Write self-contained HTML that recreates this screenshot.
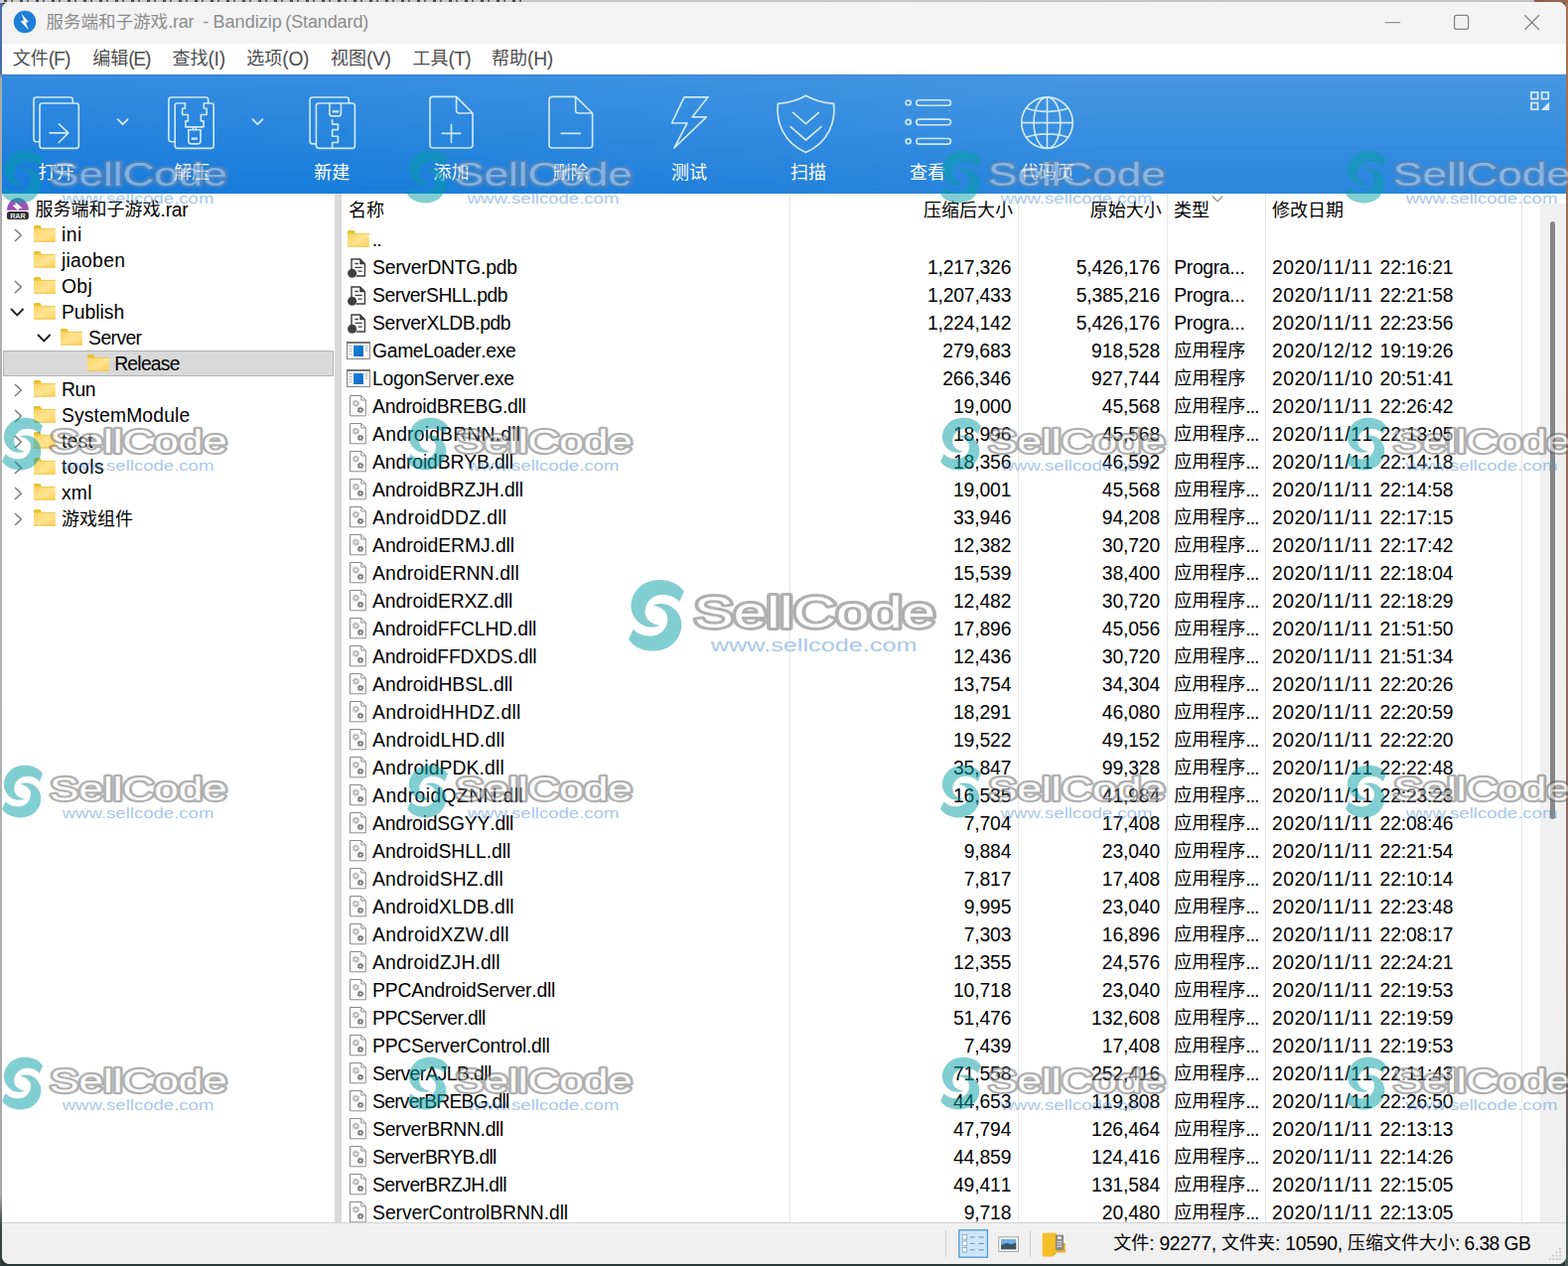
<!DOCTYPE html>
<html><head><meta charset="utf-8"><title>Bandizip</title>
<style>
html,body{margin:0;padding:0}
body{width:1579px;height:1275px;overflow:hidden;position:relative;background:#2b3a39;font-family:"Liberation Sans",sans-serif}
.t{position:absolute;white-space:pre;font-kerning:none;font-variant-ligatures:none;font-family:"Liberation Sans",sans-serif}
.z{font-family:"Liberation Sans","Noto Sans CJK SC",sans-serif;font-size:18px;line-height:18px}
.cj{position:absolute;overflow:visible}
#desk{position:absolute;left:0;top:0;width:1579px;height:1275px;background:#2b3a39}
#win{position:absolute;left:2px;top:2px;width:1575px;height:1270.6px;border-radius:8px;overflow:hidden;background:#fff}
#in{position:absolute;left:-2px;top:-2px;width:1579px;height:1275px}
#wmk{position:absolute;left:0;top:0;width:1579px;height:1275px;overflow:hidden}
</style></head><body>
<div id="desk">
<div style="position:absolute;left:0;top:0;width:1579px;height:3px;background:linear-gradient(to right,#c9c9c9 0,#c2c2c2 1544px,#8a5a48 1546px,#9a6a50 1579px)"></div>
<div style="position:absolute;left:4px;top:0;width:524px;height:2px;background:repeating-linear-gradient(to right,rgba(30,30,30,.75) 0 3px,rgba(0,0,0,0) 3px 7px,rgba(30,30,30,.6) 7px 9px,rgba(0,0,0,0) 9px 16px)"></div>
<div style="position:absolute;left:0;top:3px;width:3px;height:1272px;background:linear-gradient(to bottom,#4a6cab 0,#4a6cab 70px,#ababab 76px,#b2b2b2 700px,#a8a8a8 1200px,#3a4644 1232px,#2f3c3a 1272px)"></div>
<div style="position:absolute;left:1576px;top:3px;width:3px;height:1272px;background:linear-gradient(to bottom,#a8734f 0,#9a6858 400px,#8a6a64 900px,#4d5a58 1272px)"></div>
</div>
<div id="win"><div id="in">
<div style="position:absolute;left:0;top:2.0px;width:1579px;height:42.3px;background:#f3f3f3"></div><svg style="position:absolute;left:13px;top:10px" width="24" height="24" viewBox="0 0 24 24">
<circle cx="12" cy="12" r="11.2" fill="#1d7fd8"/>
<path d="M8.4 3.6 L15.8 12 L12.9 12.7 L16 20.2 L7.6 11.4 L11 10.5 Z" fill="#fff"/></svg><span class="t z" style="left:46.40px;top:13.52px;font-size:17.55px;line-height:17.55px;color:#8c8c8c;">服务端和子游戏</span><span class="t" style="left:169.25px;top:13.00px;font-size:18.00px;line-height:18.00px;letter-spacing:-0.255px;color:#8c8c8c;">.rar</span><span class="t" style="left:204.30px;top:13.00px;font-size:18.00px;line-height:18.00px;letter-spacing:1.356px;color:#8c8c8c;">-</span><span class="t" style="left:214.60px;top:13.00px;font-size:18.00px;line-height:18.00px;letter-spacing:0.007px;color:#8c8c8c;">Bandizip</span><span class="t" style="left:287.30px;top:13.00px;font-size:18.00px;line-height:18.00px;letter-spacing:-0.120px;color:#8c8c8c;">(Standard)</span><svg style="position:absolute;left:1380px;top:2px" width="197" height="42" viewBox="1380 2 197 42" fill="none" stroke="#868686" stroke-width="1.3">
<path d="M1394.8 22.6H1410.2" stroke="#969696"/>
<rect x="1464.6" y="15.4" width="14" height="14" rx="2.2"/>
<path d="M1535.3 15.2L1550 30M1550 15.2L1535.3 30"/></svg><div style="position:absolute;left:0;top:44.3px;width:1579px;height:30.4px;background:#fff"></div><span class="t z" style="left:12.70px;top:50.00px;color:#4d4d4d;">文件</span><span class="t" style="left:48.70px;top:50.00px;font-size:19.30px;line-height:19.30px;letter-spacing:-0.994px;color:#4d4d4d;">(F)</span><span class="t z" style="left:93.20px;top:50.00px;color:#4d4d4d;">编辑</span><span class="t" style="left:129.20px;top:50.00px;font-size:19.30px;line-height:19.30px;letter-spacing:-1.235px;color:#4d4d4d;">(E)</span><span class="t z" style="left:173.50px;top:50.00px;color:#4d4d4d;">查找</span><span class="t" style="left:209.50px;top:50.00px;font-size:19.30px;line-height:19.30px;letter-spacing:-0.318px;color:#4d4d4d;">(I)</span><span class="t z" style="left:248.30px;top:50.00px;color:#4d4d4d;">选项</span><span class="t" style="left:284.30px;top:50.00px;font-size:19.30px;line-height:19.30px;letter-spacing:-0.307px;color:#4d4d4d;">(O)</span><span class="t z" style="left:333.10px;top:50.00px;color:#4d4d4d;">视图</span><span class="t" style="left:369.10px;top:50.00px;font-size:19.30px;line-height:19.30px;letter-spacing:-0.473px;color:#4d4d4d;">(V)</span><span class="t z" style="left:415.50px;top:50.00px;color:#4d4d4d;">工具</span><span class="t" style="left:451.50px;top:50.00px;font-size:19.30px;line-height:19.30px;letter-spacing:-0.755px;color:#4d4d4d;">(T)</span><span class="t z" style="left:495.00px;top:50.00px;color:#4d4d4d;">帮助</span><span class="t" style="left:531.00px;top:50.00px;font-size:19.30px;line-height:19.30px;letter-spacing:-0.240px;color:#4d4d4d;">(H)</span><div style="position:absolute;left:0;top:74.7px;width:1579px;height:120.3px;
background:linear-gradient(to bottom, rgba(255,255,255,.135) 0%, rgba(255,255,255,.10) 25%, rgba(255,255,255,.04) 70%, rgba(255,255,255,0) 100%),
linear-gradient(to right,#167adb 0%,#187cdb 22%,#2181dc 45%,#2a86dd 70%,#2a86dd 100%)"></div><div style="position:absolute;left:0;top:74.7px;width:1579px;height:1px;background:rgba(20,60,120,.18)"></div><svg style="position:absolute;left:0;top:75px" width="1579" height="120" viewBox="0 75 1579 120" fill="none" stroke="#cfe9fd" stroke-width="1.65" stroke-linejoin="round" stroke-linecap="round"><path d="M40 142.7H36.6Q34 142.7 34 140.1V100.6Q34 98 36.6 98H70.7Q73.3 98 73.3 100.6V103.6"/><rect x="40" y="104" width="39.3" height="45.3" rx="2.6"/><path d="M50 133.9H68.6M59.3 124.9L68.9 133.9L59.3 143.5"/><path d="M118.8 120.3L123.6 125.2L128.4 120.3M254.6 120.3L259.4 125.2L264.2 120.3" stroke-width="1.9"/><path d="M176.2 142.7H172.5Q169.9 142.7 169.9 140.1V100.6Q169.9 98 172.5 98H207.1Q209.7 98 209.7 100.6V103.6"/><path d="M186.4 104H178.4Q176.2 104 176.2 106.2V147.1Q176.2 149.3 178.4 149.3H213Q215.2 149.3 215.2 147.1V106.2Q215.2 104 213 104H205.3V109.2H208.1V115.5H202.3V121.9H205V127.9H186.9V121.9H189.4V115.5H183.6V109.2H186.4Z"/><path d="M194.3 128V130.6M197.3 128V130.6"/><path d="M189.8 130.7H202V141.4Q202 144.9 198.5 144.9H193.3Q189.8 144.9 189.8 141.4Z"/><path d="M193.6 139.7H198" stroke-width="2.2"/><path d="M318.4 144.9H314.7Q312.1 144.9 312.1 142.3V100.6Q312.1 98 314.7 98H348.7Q351.3 98 351.3 100.6V103.6"/><rect x="318.4" y="104" width="39" height="45.3" rx="2.6"/><path d="M331.9 104V114.2Q331.9 116.9 334.6 116.9H340.7Q343.4 116.9 343.4 114.2V104"/><path d="M335.6 112.4H340.2" stroke-width="2.2"/><path d="M334.6 120.8V125.1H340.4V130.6H334.6V137.2H340.4V143.5H334.6V149.3"/><path d="M459.6 97.4H436Q433 97.4 433 100.4V146Q433 149 436 149H473Q476 149 476 146V114Z M459.6 97.4V111Q459.6 114 462.6 114H476"/><path d="M445.4 134.4H463.6M454.5 125.4V143.4"/><path d="M579.6 97.4H556Q553 97.4 553 100.4V146Q553 149 556 149H593.6Q596.6 149 596.6 146V114Z M579.6 97.4V111Q579.6 114 582.6 114H596.6"/><path d="M565.2 134.4H584.4"/><path d="M689 97.8H713L697.2 117.8H711.4L678.8 149.2L692 124H676.5Z"/><path d="M811.5 96.2C803 101.6 792.5 103.6 783.4 104.4C781.4 122 788 143 811.5 153.6C835 143 841.6 122 839.6 104.4C830.5 103.6 820 101.6 811.5 96.2Z" stroke-width="1.7"/><path d="M798.6 113.4L811.5 124.6L824.4 113.4M796 127.6L811.5 141L827 127.6" stroke-width="1.7"/><circle cx="914.7" cy="103.5" r="2.5"/><rect x="922.8" y="100.7" width="34.6" height="5.6" rx="2.8"/><circle cx="914.7" cy="122.9" r="2.5"/><rect x="922.8" y="120.10000000000001" width="34.6" height="5.6" rx="2.8"/><circle cx="914.7" cy="142.3" r="2.5"/><rect x="922.8" y="139.5" width="34.6" height="5.6" rx="2.8"/><circle cx="1054.5" cy="123.6" r="25.8"/><ellipse cx="1054.5" cy="123.6" rx="13.4" ry="25.8"/><path d="M1054.5 97.8V149.4M1028.7 123.6H1080.3M1033.4 109C1046 113.4 1063 113.4 1075.6 109M1033.4 138.2C1046 133.8 1063 133.8 1075.6 138.2"/></svg><svg style="position:absolute;left:1538px;top:90px" width="26" height="24" viewBox="1538 90 26 24" fill="none" stroke="#d9edfc" stroke-width="1.7">
<rect x="1542" y="93" width="6.6" height="6.6"/><rect x="1552.6" y="93" width="6.6" height="6.6"/><rect x="1542" y="103.6" width="6.6" height="6.6"/>
<path d="M1560.1 102.8V111H1551.8Z" fill="#d9edfc" stroke="none"/></svg><span class="t z" style="left:38.50px;top:164.80px;color:#ffffff;">打开</span><span class="t z" style="left:175.00px;top:164.80px;color:#ffffff;">解压</span><span class="t z" style="left:316.20px;top:164.80px;color:#ffffff;">新建</span><span class="t z" style="left:436.40px;top:164.80px;color:#ffffff;">添加</span><span class="t z" style="left:556.40px;top:164.80px;color:#ffffff;">删除</span><span class="t z" style="left:676.00px;top:164.80px;color:#ffffff;">测试</span><span class="t z" style="left:796.00px;top:164.80px;color:#ffffff;">扫描</span><span class="t z" style="left:916.00px;top:164.80px;color:#ffffff;">查看</span><span class="t z" style="left:1027.40px;top:164.80px;color:#ffffff;">代码页</span><div style="position:absolute;left:0;top:195px;width:1579px;height:1036px;background:#fff"></div><div style="position:absolute;left:337.2px;top:195px;width:6.8px;height:1036px;background:#dadada"></div><div style="position:absolute;left:795.0px;top:195px;width:1px;height:1036px;background:#e6e6e6"></div><div style="position:absolute;left:1025.0px;top:195px;width:1px;height:1036px;background:#e6e6e6"></div><div style="position:absolute;left:1175.0px;top:195px;width:1px;height:1036px;background:#e6e6e6"></div><div style="position:absolute;left:1274.2px;top:195px;width:1px;height:1036px;background:#e6e6e6"></div><div style="position:absolute;left:1532.3px;top:195px;width:1px;height:1036px;background:#e6e6e6"></div><div style="position:absolute;left:1551px;top:205px;width:26px;height:1026px;background:#f0f0f0"></div><div style="position:absolute;left:1561px;top:222.6px;width:5px;height:602px;background:#878787;border-radius:2.5px"></div><svg width="0" height="0" style="position:absolute"><defs>
<linearGradient id="fg" x1="0" y1="0" x2="1" y2="1"><stop offset="0" stop-color="#fbd45f"/><stop offset="0.55" stop-color="#ffe491"/><stop offset="1" stop-color="#fbd055"/></linearGradient>
<linearGradient id="bg" x1="0" y1="0" x2="1" y2="1"><stop offset="0" stop-color="#1b86e6"/><stop offset="1" stop-color="#0f68bd"/></linearGradient>
<g id="folder"><path d="M0 1.4Q0 0 1.4 0H5.6Q6.6 0 7 0.9L8 3.4H0Z" fill="#e4c32a"/><rect x="0" y="2.9" width="21.8" height="13.7" fill="url(#fg)"/><rect x="0" y="15.6" width="21.8" height="1" fill="#eec244"/><rect x="0" y="2.9" width="21.8" height="0.8" fill="#e9c84e"/></g>
<g id="pdb"><path d="M4 11.5V0.9H12.6L17.4 5.7V17.9H8.6" fill="#fff" stroke="#3d3d3d" stroke-width="1.45"/><path d="M12.2 0.6L17.8 6.2H12.2Z" fill="#3d3d3d"/><path d="M7.4 5.5H10.9M7.4 9.4H14.8M10.4 13.2H14.8" stroke="#3d3d3d" stroke-width="1.3"/><circle cx="4.6" cy="15.3" r="4.5" fill="#3f3f3f"/></g>
<g id="exe"><rect x="0.5" y="0.8" width="22.8" height="16.6" fill="#fff" stroke="#7b7b7b" stroke-width="1"/><rect x="0" y="0" width="23.8" height="1.9" fill="#6e6e6e"/><rect x="7" y="3.8" width="9.9" height="11.2" fill="url(#bg)"/><path d="M2.6 4.4H5.6M2.6 7.2H5.6M2.6 10H5.6M2.6 12.8H5.6M18.6 4.4H21.4M18.6 6.8H21.4M18.6 9.2H21.4" stroke="#9a9a9a" stroke-width="0.9"/></g>
<g id="dll"><path d="M0.5 0.5H11.8L16.3 5V20.8H0.5Z" fill="#fff" stroke="#8a8a8a" stroke-width="1"/><path d="M11.8 0.5V5H16.3" fill="none" stroke="#8a8a8a" stroke-width="1"/>
<circle cx="6.4" cy="8.2" r="2" fill="none" stroke="#b8b8b8" stroke-width="1.7"/><circle cx="6.4" cy="8.2" r="3.2" fill="none" stroke="#b8b8b8" stroke-width="1.1" stroke-dasharray="1.25 1.25"/>
<circle cx="11" cy="14.9" r="1.7" fill="none" stroke="#747474" stroke-width="1.5"/><circle cx="11" cy="14.9" r="2.8" fill="none" stroke="#747474" stroke-width="1.1" stroke-dasharray="1.1 1.1"/></g>
<g id="chr"><path d="M0 0L6.3 6L0 12" fill="none" stroke="#757575" stroke-width="1.4"/></g>
<g id="chd"><path d="M0 0L6.3 6.4L12.6 0" fill="none" stroke="#222" stroke-width="1.9"/></g>
<linearGradient id="swg" gradientUnits="userSpaceOnUse" x1="-400" y1="-500" x2="400" y2="500"><stop offset="0" stop-color="#00a3a8"/><stop offset="1" stop-color="#14939f"/></linearGradient>
<g id="swirl"><path id="sw1" d="M395,-342 C310,-462 180,-507 50,-507 C-80,-507 -190,-462 -260,-382 C-330,-312 -360,-222 -360,-132 C-360,-22 -300,68 -210,128 C-120,183 -20,173 50,143 C-60,128 -150,68 -160,-32 C-170,-162 -80,-282 50,-292 C170,-302 270,-262 330,-197 Z"/><use href="#sw1" transform="rotate(180)"/></g>
<g id="wmt">
<text x="65.8" y="47.5" font-family="Liberation Sans, sans-serif" font-size="44" textLength="243" lengthAdjust="spacingAndGlyphs" fill="#ffffff" stroke="#636363" stroke-width="5.8" stroke-linejoin="round" paint-order="stroke fill">SellCode</text>
<text x="82.8" y="71.8" font-family="Liberation Sans, sans-serif" font-size="19.2" textLength="207.8" lengthAdjust="spacingAndGlyphs" fill="#5191d9">www.sellcode.com</text>
</g>
<g id="wmt1">
<text x="65.8" y="47.5" font-family="Liberation Sans, sans-serif" font-size="44" textLength="243" lengthAdjust="spacingAndGlyphs" fill="#ffffff" fill-opacity="0.8" stroke="#6c84a6" stroke-width="5.8" stroke-linejoin="round" paint-order="stroke fill">SellCode</text>
<text x="82.8" y="71.8" font-family="Liberation Sans, sans-serif" font-size="19.2" textLength="207.8" lengthAdjust="spacingAndGlyphs" fill="#5191d9">www.sellcode.com</text>
</g>
<g id="wms1"><g transform="translate(27.4 36.2) scale(0.0706)" fill="url(#swg)"><use href="#swirl"/></g><use href="#wmt1" y="1.1" x="-1"/></g>
<g id="wm"><g transform="translate(27.9 35.8) scale(0.0706)" fill="url(#swg)"><use href="#swirl"/></g><use href="#wmt"/></g>
<g id="wms"><g transform="translate(27.4 36.2) scale(0.0706)" fill="url(#swg)"><use href="#swirl"/></g><use href="#wmt" y="1.1" x="-1"/></g>
</defs></svg><div style="position:absolute;left:3px;top:353.4px;width:332.6px;height:25.2px;background:#d9d9d9;box-shadow:inset 0 0 0 1px #b3b3b3"></div><svg class="cj" style="left:6px;top:198px" width="24" height="24" viewBox="6 198 24 24">
<defs><linearGradient id="rg" x1="0" y1="0" x2="0" y2="1"><stop offset="0" stop-color="#3f7fb0"/><stop offset="0.45" stop-color="#a253b4"/><stop offset="1" stop-color="#9a4fae"/></linearGradient></defs>
<path d="M7 211.8A10.95 12.6 0 0 1 28.9 211.8Z" fill="url(#rg)"/>
<path d="M15.4 203.4L22.6 209.4L19 210.2L18 212L12.6 206.8L15.8 206.2Z" fill="#fff"/>
<rect x="7" y="213.1" width="21.9" height="7.9" rx="2.6" fill="#2f2f2f"/>
<text x="17.95" y="219.9" font-family="Liberation Sans, sans-serif" font-weight="bold" font-size="7.6" fill="#e8e8e8" text-anchor="middle" textLength="15.6" lengthAdjust="spacingAndGlyphs">RAR</text></svg><span class="t z" style="left:35.50px;top:202.00px;color:#000;">服务端和子游戏</span><span class="t" style="left:161.50px;top:202.00px;font-size:19.30px;line-height:19.30px;letter-spacing:-0.223px;color:#000;">.rar</span><svg class="cj" style="left:14.50px;top:231.10px" width="8" height="13"><use href="#chr"/></svg><svg class="cj" style="left:34.20px;top:227.30px" width="22" height="17"><use href="#folder"/></svg><span class="t" style="left:61.90px;top:227.00px;font-size:19.30px;line-height:19.30px;letter-spacing:0.510px;color:#000;">ini</span><svg class="cj" style="left:34.20px;top:253.30px" width="22" height="17"><use href="#folder"/></svg><span class="t" style="left:61.90px;top:253.00px;font-size:19.30px;line-height:19.30px;letter-spacing:0.303px;color:#000;">jiaoben</span><svg class="cj" style="left:14.50px;top:283.10px" width="8" height="13"><use href="#chr"/></svg><svg class="cj" style="left:34.20px;top:279.30px" width="22" height="17"><use href="#folder"/></svg><span class="t" style="left:61.90px;top:279.00px;font-size:19.30px;line-height:19.30px;letter-spacing:0.469px;color:#000;">Obj</span><svg class="cj" style="left:11.00px;top:311.00px" width="14" height="9"><use href="#chd"/></svg><svg class="cj" style="left:34.20px;top:305.30px" width="22" height="17"><use href="#folder"/></svg><span class="t" style="left:61.90px;top:305.00px;font-size:19.30px;line-height:19.30px;letter-spacing:-0.004px;color:#000;">Publish</span><svg class="cj" style="left:38.20px;top:337.00px" width="14" height="9"><use href="#chd"/></svg><svg class="cj" style="left:61.40px;top:331.30px" width="22" height="17"><use href="#folder"/></svg><span class="t" style="left:89.10px;top:331.00px;font-size:19.30px;line-height:19.30px;letter-spacing:-0.570px;color:#000;">Server</span><svg class="cj" style="left:87.50px;top:357.30px" width="22" height="17"><use href="#folder"/></svg><span class="t" style="left:115.20px;top:357.00px;font-size:19.30px;line-height:19.30px;letter-spacing:-0.746px;color:#000;">Release</span><svg class="cj" style="left:14.50px;top:387.10px" width="8" height="13"><use href="#chr"/></svg><svg class="cj" style="left:34.20px;top:383.30px" width="22" height="17"><use href="#folder"/></svg><span class="t" style="left:61.90px;top:383.00px;font-size:19.30px;line-height:19.30px;letter-spacing:-0.362px;color:#000;">Run</span><svg class="cj" style="left:14.50px;top:413.10px" width="8" height="13"><use href="#chr"/></svg><svg class="cj" style="left:34.20px;top:409.30px" width="22" height="17"><use href="#folder"/></svg><span class="t" style="left:61.90px;top:409.00px;font-size:19.30px;line-height:19.30px;letter-spacing:0.161px;color:#000;">SystemModule</span><svg class="cj" style="left:14.50px;top:439.10px" width="8" height="13"><use href="#chr"/></svg><svg class="cj" style="left:34.20px;top:435.30px" width="22" height="17"><use href="#folder"/></svg><span class="t" style="left:61.90px;top:435.00px;font-size:19.30px;line-height:19.30px;letter-spacing:0.224px;color:#000;">test</span><svg class="cj" style="left:14.50px;top:465.10px" width="8" height="13"><use href="#chr"/></svg><svg class="cj" style="left:34.20px;top:461.30px" width="22" height="17"><use href="#folder"/></svg><span class="t" style="left:61.90px;top:461.00px;font-size:19.30px;line-height:19.30px;letter-spacing:0.490px;color:#000;">tools</span><svg class="cj" style="left:14.50px;top:491.10px" width="8" height="13"><use href="#chr"/></svg><svg class="cj" style="left:34.20px;top:487.30px" width="22" height="17"><use href="#folder"/></svg><span class="t" style="left:61.90px;top:487.00px;font-size:19.30px;line-height:19.30px;letter-spacing:0.330px;color:#000;">xml</span><svg class="cj" style="left:14.50px;top:517.10px" width="8" height="13"><use href="#chr"/></svg><svg class="cj" style="left:34.20px;top:513.30px" width="22" height="17"><use href="#folder"/></svg><span class="t z" style="left:61.90px;top:513.70px;color:#000;">游戏组件</span><span class="t z" style="left:351.00px;top:203.40px;color:#000;">名称</span><span class="t z" style="left:929.90px;top:203.40px;color:#000;">压缩后大小</span><span class="t z" style="left:1097.70px;top:203.40px;color:#000;">原始大小</span><span class="t z" style="left:1182.00px;top:203.40px;color:#000;">类型</span><span class="t z" style="left:1281.00px;top:203.40px;color:#000;">修改日期</span><svg class="cj" style="left:1220px;top:196px" width="12" height="8" viewBox="1220 196 12 8"><path d="M1221 197.7L1226 202.8L1231 197.7" fill="none" stroke="#7a7a7a" stroke-width="1.1"/></svg><div style="position:absolute;left:344px;top:195px;width:1207px;height:1036px;overflow:hidden"><div style="position:absolute;left:-344px;top:-195px;width:1579px;height:1275px"><svg class="cj" style="left:350.00px;top:232.20px" width="22" height="17"><use href="#folder"/></svg><span class="t" style="left:374.80px;top:232.00px;font-size:19.30px;line-height:19.30px;letter-spacing:-0.916px;color:#000;">..</span><svg class="cj" style="left:350.00px;top:260.00px" width="19" height="20"><use href="#pdb"/></svg><span class="t" style="left:375.10px;top:260.00px;font-size:19.30px;line-height:19.30px;letter-spacing:-0.244px;color:#000;">ServerDNTG.pdb</span><span class="t" style="left:934.01px;top:260.00px;font-size:19.30px;line-height:19.30px;letter-spacing:-0.175px;color:#000;">1,217,326</span><span class="t" style="left:1083.81px;top:260.00px;font-size:19.30px;line-height:19.30px;letter-spacing:-0.175px;color:#000;">5,426,176</span><span class="t" style="left:1182.20px;top:260.00px;font-size:19.30px;line-height:19.30px;letter-spacing:-0.294px;color:#000;">Progra...</span><span class="t" style="left:1281.00px;top:260.00px;font-size:19.30px;line-height:19.30px;letter-spacing:0.517px;color:#000;">2020/11/11</span><span class="t" style="left:1389.60px;top:260.00px;font-size:19.30px;line-height:19.30px;letter-spacing:-0.152px;color:#000;">22:16:21</span><svg class="cj" style="left:350.00px;top:288.00px" width="19" height="20"><use href="#pdb"/></svg><span class="t" style="left:375.10px;top:288.00px;font-size:19.30px;line-height:19.30px;letter-spacing:-0.480px;color:#000;">ServerSHLL.pdb</span><span class="t" style="left:934.01px;top:288.00px;font-size:19.30px;line-height:19.30px;letter-spacing:-0.175px;color:#000;">1,207,433</span><span class="t" style="left:1083.81px;top:288.00px;font-size:19.30px;line-height:19.30px;letter-spacing:-0.175px;color:#000;">5,385,216</span><span class="t" style="left:1182.20px;top:288.00px;font-size:19.30px;line-height:19.30px;letter-spacing:-0.294px;color:#000;">Progra...</span><span class="t" style="left:1281.00px;top:288.00px;font-size:19.30px;line-height:19.30px;letter-spacing:0.517px;color:#000;">2020/11/11</span><span class="t" style="left:1389.60px;top:288.00px;font-size:19.30px;line-height:19.30px;letter-spacing:-0.152px;color:#000;">22:21:58</span><svg class="cj" style="left:350.00px;top:316.00px" width="19" height="20"><use href="#pdb"/></svg><span class="t" style="left:375.10px;top:316.00px;font-size:19.30px;line-height:19.30px;letter-spacing:-0.400px;color:#000;">ServerXLDB.pdb</span><span class="t" style="left:934.01px;top:316.00px;font-size:19.30px;line-height:19.30px;letter-spacing:-0.175px;color:#000;">1,224,142</span><span class="t" style="left:1083.81px;top:316.00px;font-size:19.30px;line-height:19.30px;letter-spacing:-0.175px;color:#000;">5,426,176</span><span class="t" style="left:1182.20px;top:316.00px;font-size:19.30px;line-height:19.30px;letter-spacing:-0.294px;color:#000;">Progra...</span><span class="t" style="left:1281.00px;top:316.00px;font-size:19.30px;line-height:19.30px;letter-spacing:0.517px;color:#000;">2020/11/11</span><span class="t" style="left:1389.60px;top:316.00px;font-size:19.30px;line-height:19.30px;letter-spacing:-0.152px;color:#000;">22:23:56</span><svg class="cj" style="left:349.10px;top:344.20px" width="24" height="18"><use href="#exe"/></svg><span class="t" style="left:375.10px;top:344.00px;font-size:19.30px;line-height:19.30px;letter-spacing:-0.340px;color:#000;">GameLoader.exe</span><span class="t" style="left:949.23px;top:344.00px;font-size:19.30px;line-height:19.30px;letter-spacing:-0.099px;color:#000;">279,683</span><span class="t" style="left:1099.03px;top:344.00px;font-size:19.30px;line-height:19.30px;letter-spacing:-0.099px;color:#000;">918,528</span><span class="t z" style="left:1182.20px;top:344.10px;color:#000;">应用程序</span><span class="t" style="left:1281.00px;top:344.00px;font-size:19.30px;line-height:19.30px;letter-spacing:0.517px;color:#000;">2020/12/12</span><span class="t" style="left:1389.60px;top:344.00px;font-size:19.30px;line-height:19.30px;letter-spacing:-0.152px;color:#000;">19:19:26</span><svg class="cj" style="left:349.10px;top:372.20px" width="24" height="18"><use href="#exe"/></svg><span class="t" style="left:375.10px;top:372.00px;font-size:19.30px;line-height:19.30px;letter-spacing:-0.284px;color:#000;">LogonServer.exe</span><span class="t" style="left:949.23px;top:372.00px;font-size:19.30px;line-height:19.30px;letter-spacing:-0.099px;color:#000;">266,346</span><span class="t" style="left:1099.03px;top:372.00px;font-size:19.30px;line-height:19.30px;letter-spacing:-0.099px;color:#000;">927,744</span><span class="t z" style="left:1182.20px;top:372.10px;color:#000;">应用程序</span><span class="t" style="left:1281.00px;top:372.00px;font-size:19.30px;line-height:19.30px;letter-spacing:0.517px;color:#000;">2020/11/10</span><span class="t" style="left:1389.60px;top:372.00px;font-size:19.30px;line-height:19.30px;letter-spacing:-0.152px;color:#000;">20:51:41</span><svg class="cj" style="left:352.00px;top:398.40px" width="17" height="22"><use href="#dll"/></svg><span class="t" style="left:375.10px;top:400.00px;font-size:19.30px;line-height:19.30px;letter-spacing:-0.261px;color:#000;">AndroidBREBG.dll</span><span class="t" style="left:960.00px;top:400.00px;font-size:19.30px;line-height:19.30px;letter-spacing:-0.122px;color:#000;">19,000</span><span class="t" style="left:1109.80px;top:400.00px;font-size:19.30px;line-height:19.30px;letter-spacing:-0.122px;color:#000;">45,568</span><span class="t z" style="left:1182.20px;top:400.10px;color:#000;">应用程序</span><span class="t" style="left:1254.20px;top:400.00px;font-size:19.30px;line-height:19.30px;letter-spacing:-0.916px;color:#000;">...</span><span class="t" style="left:1281.00px;top:400.00px;font-size:19.30px;line-height:19.30px;letter-spacing:0.517px;color:#000;">2020/11/11</span><span class="t" style="left:1389.60px;top:400.00px;font-size:19.30px;line-height:19.30px;letter-spacing:-0.152px;color:#000;">22:26:42</span><svg class="cj" style="left:352.00px;top:426.40px" width="17" height="22"><use href="#dll"/></svg><span class="t" style="left:375.10px;top:428.00px;font-size:19.30px;line-height:19.30px;letter-spacing:0.224px;color:#000;">AndroidBRNN.dll</span><span class="t" style="left:960.00px;top:428.00px;font-size:19.30px;line-height:19.30px;letter-spacing:-0.122px;color:#000;">18,996</span><span class="t" style="left:1109.80px;top:428.00px;font-size:19.30px;line-height:19.30px;letter-spacing:-0.122px;color:#000;">45,568</span><span class="t z" style="left:1182.20px;top:428.10px;color:#000;">应用程序</span><span class="t" style="left:1254.20px;top:428.00px;font-size:19.30px;line-height:19.30px;letter-spacing:-0.916px;color:#000;">...</span><span class="t" style="left:1281.00px;top:428.00px;font-size:19.30px;line-height:19.30px;letter-spacing:0.517px;color:#000;">2020/11/11</span><span class="t" style="left:1389.60px;top:428.00px;font-size:19.30px;line-height:19.30px;letter-spacing:-0.152px;color:#000;">22:13:05</span><svg class="cj" style="left:352.00px;top:454.40px" width="17" height="22"><use href="#dll"/></svg><span class="t" style="left:375.10px;top:456.00px;font-size:19.30px;line-height:19.30px;letter-spacing:-0.123px;color:#000;">AndroidBRYB.dll</span><span class="t" style="left:960.00px;top:456.00px;font-size:19.30px;line-height:19.30px;letter-spacing:-0.122px;color:#000;">18,356</span><span class="t" style="left:1109.80px;top:456.00px;font-size:19.30px;line-height:19.30px;letter-spacing:-0.122px;color:#000;">46,592</span><span class="t z" style="left:1182.20px;top:456.10px;color:#000;">应用程序</span><span class="t" style="left:1254.20px;top:456.00px;font-size:19.30px;line-height:19.30px;letter-spacing:-0.916px;color:#000;">...</span><span class="t" style="left:1281.00px;top:456.00px;font-size:19.30px;line-height:19.30px;letter-spacing:0.517px;color:#000;">2020/11/11</span><span class="t" style="left:1389.60px;top:456.00px;font-size:19.30px;line-height:19.30px;letter-spacing:-0.152px;color:#000;">22:14:18</span><svg class="cj" style="left:352.00px;top:482.40px" width="17" height="22"><use href="#dll"/></svg><span class="t" style="left:375.10px;top:484.00px;font-size:19.30px;line-height:19.30px;letter-spacing:-0.084px;color:#000;">AndroidBRZJH.dll</span><span class="t" style="left:960.00px;top:484.00px;font-size:19.30px;line-height:19.30px;letter-spacing:-0.122px;color:#000;">19,001</span><span class="t" style="left:1109.80px;top:484.00px;font-size:19.30px;line-height:19.30px;letter-spacing:-0.122px;color:#000;">45,568</span><span class="t z" style="left:1182.20px;top:484.10px;color:#000;">应用程序</span><span class="t" style="left:1254.20px;top:484.00px;font-size:19.30px;line-height:19.30px;letter-spacing:-0.916px;color:#000;">...</span><span class="t" style="left:1281.00px;top:484.00px;font-size:19.30px;line-height:19.30px;letter-spacing:0.517px;color:#000;">2020/11/11</span><span class="t" style="left:1389.60px;top:484.00px;font-size:19.30px;line-height:19.30px;letter-spacing:-0.152px;color:#000;">22:14:58</span><svg class="cj" style="left:352.00px;top:510.40px" width="17" height="22"><use href="#dll"/></svg><span class="t" style="left:375.10px;top:512.00px;font-size:19.30px;line-height:19.30px;letter-spacing:0.328px;color:#000;">AndroidDDZ.dll</span><span class="t" style="left:960.00px;top:512.00px;font-size:19.30px;line-height:19.30px;letter-spacing:-0.122px;color:#000;">33,946</span><span class="t" style="left:1109.80px;top:512.00px;font-size:19.30px;line-height:19.30px;letter-spacing:-0.122px;color:#000;">94,208</span><span class="t z" style="left:1182.20px;top:512.10px;color:#000;">应用程序</span><span class="t" style="left:1254.20px;top:512.00px;font-size:19.30px;line-height:19.30px;letter-spacing:-0.916px;color:#000;">...</span><span class="t" style="left:1281.00px;top:512.00px;font-size:19.30px;line-height:19.30px;letter-spacing:0.517px;color:#000;">2020/11/11</span><span class="t" style="left:1389.60px;top:512.00px;font-size:19.30px;line-height:19.30px;letter-spacing:-0.152px;color:#000;">22:17:15</span><svg class="cj" style="left:352.00px;top:538.40px" width="17" height="22"><use href="#dll"/></svg><span class="t" style="left:375.10px;top:540.00px;font-size:19.30px;line-height:19.30px;letter-spacing:-0.041px;color:#000;">AndroidERMJ.dll</span><span class="t" style="left:960.00px;top:540.00px;font-size:19.30px;line-height:19.30px;letter-spacing:-0.122px;color:#000;">12,382</span><span class="t" style="left:1109.80px;top:540.00px;font-size:19.30px;line-height:19.30px;letter-spacing:-0.122px;color:#000;">30,720</span><span class="t z" style="left:1182.20px;top:540.10px;color:#000;">应用程序</span><span class="t" style="left:1254.20px;top:540.00px;font-size:19.30px;line-height:19.30px;letter-spacing:-0.916px;color:#000;">...</span><span class="t" style="left:1281.00px;top:540.00px;font-size:19.30px;line-height:19.30px;letter-spacing:0.517px;color:#000;">2020/11/11</span><span class="t" style="left:1389.60px;top:540.00px;font-size:19.30px;line-height:19.30px;letter-spacing:-0.152px;color:#000;">22:17:42</span><svg class="cj" style="left:352.00px;top:566.40px" width="17" height="22"><use href="#dll"/></svg><span class="t" style="left:375.10px;top:568.00px;font-size:19.30px;line-height:19.30px;letter-spacing:0.135px;color:#000;">AndroidERNN.dll</span><span class="t" style="left:960.00px;top:568.00px;font-size:19.30px;line-height:19.30px;letter-spacing:-0.122px;color:#000;">15,539</span><span class="t" style="left:1109.80px;top:568.00px;font-size:19.30px;line-height:19.30px;letter-spacing:-0.122px;color:#000;">38,400</span><span class="t z" style="left:1182.20px;top:568.10px;color:#000;">应用程序</span><span class="t" style="left:1254.20px;top:568.00px;font-size:19.30px;line-height:19.30px;letter-spacing:-0.916px;color:#000;">...</span><span class="t" style="left:1281.00px;top:568.00px;font-size:19.30px;line-height:19.30px;letter-spacing:0.517px;color:#000;">2020/11/11</span><span class="t" style="left:1389.60px;top:568.00px;font-size:19.30px;line-height:19.30px;letter-spacing:-0.152px;color:#000;">22:18:04</span><svg class="cj" style="left:352.00px;top:594.40px" width="17" height="22"><use href="#dll"/></svg><span class="t" style="left:375.10px;top:596.00px;font-size:19.30px;line-height:19.30px;letter-spacing:-0.095px;color:#000;">AndroidERXZ.dll</span><span class="t" style="left:960.00px;top:596.00px;font-size:19.30px;line-height:19.30px;letter-spacing:-0.122px;color:#000;">12,482</span><span class="t" style="left:1109.80px;top:596.00px;font-size:19.30px;line-height:19.30px;letter-spacing:-0.122px;color:#000;">30,720</span><span class="t z" style="left:1182.20px;top:596.10px;color:#000;">应用程序</span><span class="t" style="left:1254.20px;top:596.00px;font-size:19.30px;line-height:19.30px;letter-spacing:-0.916px;color:#000;">...</span><span class="t" style="left:1281.00px;top:596.00px;font-size:19.30px;line-height:19.30px;letter-spacing:0.517px;color:#000;">2020/11/11</span><span class="t" style="left:1389.60px;top:596.00px;font-size:19.30px;line-height:19.30px;letter-spacing:-0.152px;color:#000;">22:18:29</span><svg class="cj" style="left:352.00px;top:622.40px" width="17" height="22"><use href="#dll"/></svg><span class="t" style="left:375.10px;top:624.00px;font-size:19.30px;line-height:19.30px;letter-spacing:-0.119px;color:#000;">AndroidFFCLHD.dll</span><span class="t" style="left:960.00px;top:624.00px;font-size:19.30px;line-height:19.30px;letter-spacing:-0.122px;color:#000;">17,896</span><span class="t" style="left:1109.80px;top:624.00px;font-size:19.30px;line-height:19.30px;letter-spacing:-0.122px;color:#000;">45,056</span><span class="t z" style="left:1182.20px;top:624.10px;color:#000;">应用程序</span><span class="t" style="left:1254.20px;top:624.00px;font-size:19.30px;line-height:19.30px;letter-spacing:-0.916px;color:#000;">...</span><span class="t" style="left:1281.00px;top:624.00px;font-size:19.30px;line-height:19.30px;letter-spacing:0.517px;color:#000;">2020/11/11</span><span class="t" style="left:1389.60px;top:624.00px;font-size:19.30px;line-height:19.30px;letter-spacing:-0.152px;color:#000;">21:51:50</span><svg class="cj" style="left:352.00px;top:650.40px" width="17" height="22"><use href="#dll"/></svg><span class="t" style="left:375.10px;top:652.00px;font-size:19.30px;line-height:19.30px;letter-spacing:-0.169px;color:#000;">AndroidFFDXDS.dll</span><span class="t" style="left:960.00px;top:652.00px;font-size:19.30px;line-height:19.30px;letter-spacing:-0.122px;color:#000;">12,436</span><span class="t" style="left:1109.80px;top:652.00px;font-size:19.30px;line-height:19.30px;letter-spacing:-0.122px;color:#000;">30,720</span><span class="t z" style="left:1182.20px;top:652.10px;color:#000;">应用程序</span><span class="t" style="left:1254.20px;top:652.00px;font-size:19.30px;line-height:19.30px;letter-spacing:-0.916px;color:#000;">...</span><span class="t" style="left:1281.00px;top:652.00px;font-size:19.30px;line-height:19.30px;letter-spacing:0.517px;color:#000;">2020/11/11</span><span class="t" style="left:1389.60px;top:652.00px;font-size:19.30px;line-height:19.30px;letter-spacing:-0.152px;color:#000;">21:51:34</span><svg class="cj" style="left:352.00px;top:678.40px" width="17" height="22"><use href="#dll"/></svg><span class="t" style="left:375.10px;top:680.00px;font-size:19.30px;line-height:19.30px;letter-spacing:-0.013px;color:#000;">AndroidHBSL.dll</span><span class="t" style="left:960.00px;top:680.00px;font-size:19.30px;line-height:19.30px;letter-spacing:-0.122px;color:#000;">13,754</span><span class="t" style="left:1109.80px;top:680.00px;font-size:19.30px;line-height:19.30px;letter-spacing:-0.122px;color:#000;">34,304</span><span class="t z" style="left:1182.20px;top:680.10px;color:#000;">应用程序</span><span class="t" style="left:1254.20px;top:680.00px;font-size:19.30px;line-height:19.30px;letter-spacing:-0.916px;color:#000;">...</span><span class="t" style="left:1281.00px;top:680.00px;font-size:19.30px;line-height:19.30px;letter-spacing:0.517px;color:#000;">2020/11/11</span><span class="t" style="left:1389.60px;top:680.00px;font-size:19.30px;line-height:19.30px;letter-spacing:-0.152px;color:#000;">22:20:26</span><svg class="cj" style="left:352.00px;top:706.40px" width="17" height="22"><use href="#dll"/></svg><span class="t" style="left:375.10px;top:708.00px;font-size:19.30px;line-height:19.30px;letter-spacing:0.328px;color:#000;">AndroidHHDZ.dll</span><span class="t" style="left:960.00px;top:708.00px;font-size:19.30px;line-height:19.30px;letter-spacing:-0.122px;color:#000;">18,291</span><span class="t" style="left:1109.80px;top:708.00px;font-size:19.30px;line-height:19.30px;letter-spacing:-0.122px;color:#000;">46,080</span><span class="t z" style="left:1182.20px;top:708.10px;color:#000;">应用程序</span><span class="t" style="left:1254.20px;top:708.00px;font-size:19.30px;line-height:19.30px;letter-spacing:-0.916px;color:#000;">...</span><span class="t" style="left:1281.00px;top:708.00px;font-size:19.30px;line-height:19.30px;letter-spacing:0.517px;color:#000;">2020/11/11</span><span class="t" style="left:1389.60px;top:708.00px;font-size:19.30px;line-height:19.30px;letter-spacing:-0.152px;color:#000;">22:20:59</span><svg class="cj" style="left:352.00px;top:734.40px" width="17" height="22"><use href="#dll"/></svg><span class="t" style="left:375.10px;top:736.00px;font-size:19.30px;line-height:19.30px;letter-spacing:0.274px;color:#000;">AndroidLHD.dll</span><span class="t" style="left:960.00px;top:736.00px;font-size:19.30px;line-height:19.30px;letter-spacing:-0.122px;color:#000;">19,522</span><span class="t" style="left:1109.80px;top:736.00px;font-size:19.30px;line-height:19.30px;letter-spacing:-0.122px;color:#000;">49,152</span><span class="t z" style="left:1182.20px;top:736.10px;color:#000;">应用程序</span><span class="t" style="left:1254.20px;top:736.00px;font-size:19.30px;line-height:19.30px;letter-spacing:-0.916px;color:#000;">...</span><span class="t" style="left:1281.00px;top:736.00px;font-size:19.30px;line-height:19.30px;letter-spacing:0.517px;color:#000;">2020/11/11</span><span class="t" style="left:1389.60px;top:736.00px;font-size:19.30px;line-height:19.30px;letter-spacing:-0.152px;color:#000;">22:22:20</span><svg class="cj" style="left:352.00px;top:762.40px" width="17" height="22"><use href="#dll"/></svg><span class="t" style="left:375.10px;top:764.00px;font-size:19.30px;line-height:19.30px;letter-spacing:0.140px;color:#000;">AndroidPDK.dll</span><span class="t" style="left:960.00px;top:764.00px;font-size:19.30px;line-height:19.30px;letter-spacing:-0.122px;color:#000;">35,847</span><span class="t" style="left:1109.80px;top:764.00px;font-size:19.30px;line-height:19.30px;letter-spacing:-0.122px;color:#000;">99,328</span><span class="t z" style="left:1182.20px;top:764.10px;color:#000;">应用程序</span><span class="t" style="left:1254.20px;top:764.00px;font-size:19.30px;line-height:19.30px;letter-spacing:-0.916px;color:#000;">...</span><span class="t" style="left:1281.00px;top:764.00px;font-size:19.30px;line-height:19.30px;letter-spacing:0.517px;color:#000;">2020/11/11</span><span class="t" style="left:1389.60px;top:764.00px;font-size:19.30px;line-height:19.30px;letter-spacing:-0.152px;color:#000;">22:22:48</span><svg class="cj" style="left:352.00px;top:790.40px" width="17" height="22"><use href="#dll"/></svg><span class="t" style="left:375.10px;top:792.00px;font-size:19.30px;line-height:19.30px;letter-spacing:0.427px;color:#000;">AndroidQZNN.dll</span><span class="t" style="left:960.00px;top:792.00px;font-size:19.30px;line-height:19.30px;letter-spacing:-0.122px;color:#000;">16,535</span><span class="t" style="left:1109.80px;top:792.00px;font-size:19.30px;line-height:19.30px;letter-spacing:-0.122px;color:#000;">41,984</span><span class="t z" style="left:1182.20px;top:792.10px;color:#000;">应用程序</span><span class="t" style="left:1254.20px;top:792.00px;font-size:19.30px;line-height:19.30px;letter-spacing:-0.916px;color:#000;">...</span><span class="t" style="left:1281.00px;top:792.00px;font-size:19.30px;line-height:19.30px;letter-spacing:0.517px;color:#000;">2020/11/11</span><span class="t" style="left:1389.60px;top:792.00px;font-size:19.30px;line-height:19.30px;letter-spacing:-0.152px;color:#000;">22:23:23</span><svg class="cj" style="left:352.00px;top:818.40px" width="17" height="22"><use href="#dll"/></svg><span class="t" style="left:375.10px;top:820.00px;font-size:19.30px;line-height:19.30px;letter-spacing:-0.175px;color:#000;">AndroidSGYY.dll</span><span class="t" style="left:970.77px;top:820.00px;font-size:19.30px;line-height:19.30px;letter-spacing:-0.154px;color:#000;">7,704</span><span class="t" style="left:1109.80px;top:820.00px;font-size:19.30px;line-height:19.30px;letter-spacing:-0.122px;color:#000;">17,408</span><span class="t z" style="left:1182.20px;top:820.10px;color:#000;">应用程序</span><span class="t" style="left:1254.20px;top:820.00px;font-size:19.30px;line-height:19.30px;letter-spacing:-0.916px;color:#000;">...</span><span class="t" style="left:1281.00px;top:820.00px;font-size:19.30px;line-height:19.30px;letter-spacing:0.517px;color:#000;">2020/11/11</span><span class="t" style="left:1389.60px;top:820.00px;font-size:19.30px;line-height:19.30px;letter-spacing:-0.152px;color:#000;">22:08:46</span><svg class="cj" style="left:352.00px;top:846.40px" width="17" height="22"><use href="#dll"/></svg><span class="t" style="left:375.10px;top:848.00px;font-size:19.30px;line-height:19.30px;letter-spacing:-0.007px;color:#000;">AndroidSHLL.dll</span><span class="t" style="left:970.77px;top:848.00px;font-size:19.30px;line-height:19.30px;letter-spacing:-0.154px;color:#000;">9,884</span><span class="t" style="left:1109.80px;top:848.00px;font-size:19.30px;line-height:19.30px;letter-spacing:-0.122px;color:#000;">23,040</span><span class="t z" style="left:1182.20px;top:848.10px;color:#000;">应用程序</span><span class="t" style="left:1254.20px;top:848.00px;font-size:19.30px;line-height:19.30px;letter-spacing:-0.916px;color:#000;">...</span><span class="t" style="left:1281.00px;top:848.00px;font-size:19.30px;line-height:19.30px;letter-spacing:0.517px;color:#000;">2020/11/11</span><span class="t" style="left:1389.60px;top:848.00px;font-size:19.30px;line-height:19.30px;letter-spacing:-0.152px;color:#000;">22:21:54</span><svg class="cj" style="left:352.00px;top:874.40px" width="17" height="22"><use href="#dll"/></svg><span class="t" style="left:375.10px;top:876.00px;font-size:19.30px;line-height:19.30px;letter-spacing:0.159px;color:#000;">AndroidSHZ.dll</span><span class="t" style="left:970.77px;top:876.00px;font-size:19.30px;line-height:19.30px;letter-spacing:-0.154px;color:#000;">7,817</span><span class="t" style="left:1109.80px;top:876.00px;font-size:19.30px;line-height:19.30px;letter-spacing:-0.122px;color:#000;">17,408</span><span class="t z" style="left:1182.20px;top:876.10px;color:#000;">应用程序</span><span class="t" style="left:1254.20px;top:876.00px;font-size:19.30px;line-height:19.30px;letter-spacing:-0.916px;color:#000;">...</span><span class="t" style="left:1281.00px;top:876.00px;font-size:19.30px;line-height:19.30px;letter-spacing:0.517px;color:#000;">2020/11/11</span><span class="t" style="left:1389.60px;top:876.00px;font-size:19.30px;line-height:19.30px;letter-spacing:-0.152px;color:#000;">22:10:14</span><svg class="cj" style="left:352.00px;top:902.40px" width="17" height="22"><use href="#dll"/></svg><span class="t" style="left:375.10px;top:904.00px;font-size:19.30px;line-height:19.30px;letter-spacing:0.068px;color:#000;">AndroidXLDB.dll</span><span class="t" style="left:970.77px;top:904.00px;font-size:19.30px;line-height:19.30px;letter-spacing:-0.154px;color:#000;">9,995</span><span class="t" style="left:1109.80px;top:904.00px;font-size:19.30px;line-height:19.30px;letter-spacing:-0.122px;color:#000;">23,040</span><span class="t z" style="left:1182.20px;top:904.10px;color:#000;">应用程序</span><span class="t" style="left:1254.20px;top:904.00px;font-size:19.30px;line-height:19.30px;letter-spacing:-0.916px;color:#000;">...</span><span class="t" style="left:1281.00px;top:904.00px;font-size:19.30px;line-height:19.30px;letter-spacing:0.517px;color:#000;">2020/11/11</span><span class="t" style="left:1389.60px;top:904.00px;font-size:19.30px;line-height:19.30px;letter-spacing:-0.152px;color:#000;">22:23:48</span><svg class="cj" style="left:352.00px;top:930.40px" width="17" height="22"><use href="#dll"/></svg><span class="t" style="left:375.10px;top:932.00px;font-size:19.30px;line-height:19.30px;letter-spacing:0.271px;color:#000;">AndroidXZW.dll</span><span class="t" style="left:970.77px;top:932.00px;font-size:19.30px;line-height:19.30px;letter-spacing:-0.154px;color:#000;">7,303</span><span class="t" style="left:1109.80px;top:932.00px;font-size:19.30px;line-height:19.30px;letter-spacing:-0.122px;color:#000;">16,896</span><span class="t z" style="left:1182.20px;top:932.10px;color:#000;">应用程序</span><span class="t" style="left:1254.20px;top:932.00px;font-size:19.30px;line-height:19.30px;letter-spacing:-0.916px;color:#000;">...</span><span class="t" style="left:1281.00px;top:932.00px;font-size:19.30px;line-height:19.30px;letter-spacing:0.517px;color:#000;">2020/11/11</span><span class="t" style="left:1389.60px;top:932.00px;font-size:19.30px;line-height:19.30px;letter-spacing:-0.152px;color:#000;">22:08:17</span><svg class="cj" style="left:352.00px;top:958.40px" width="17" height="22"><use href="#dll"/></svg><span class="t" style="left:375.10px;top:960.00px;font-size:19.30px;line-height:19.30px;letter-spacing:0.158px;color:#000;">AndroidZJH.dll</span><span class="t" style="left:960.00px;top:960.00px;font-size:19.30px;line-height:19.30px;letter-spacing:-0.122px;color:#000;">12,355</span><span class="t" style="left:1109.80px;top:960.00px;font-size:19.30px;line-height:19.30px;letter-spacing:-0.122px;color:#000;">24,576</span><span class="t z" style="left:1182.20px;top:960.10px;color:#000;">应用程序</span><span class="t" style="left:1254.20px;top:960.00px;font-size:19.30px;line-height:19.30px;letter-spacing:-0.916px;color:#000;">...</span><span class="t" style="left:1281.00px;top:960.00px;font-size:19.30px;line-height:19.30px;letter-spacing:0.517px;color:#000;">2020/11/11</span><span class="t" style="left:1389.60px;top:960.00px;font-size:19.30px;line-height:19.30px;letter-spacing:-0.152px;color:#000;">22:24:21</span><svg class="cj" style="left:352.00px;top:986.40px" width="17" height="22"><use href="#dll"/></svg><span class="t" style="left:375.10px;top:988.00px;font-size:19.30px;line-height:19.30px;letter-spacing:-0.174px;color:#000;">PPCAndroidServer.dll</span><span class="t" style="left:960.00px;top:988.00px;font-size:19.30px;line-height:19.30px;letter-spacing:-0.122px;color:#000;">10,718</span><span class="t" style="left:1109.80px;top:988.00px;font-size:19.30px;line-height:19.30px;letter-spacing:-0.122px;color:#000;">23,040</span><span class="t z" style="left:1182.20px;top:988.10px;color:#000;">应用程序</span><span class="t" style="left:1254.20px;top:988.00px;font-size:19.30px;line-height:19.30px;letter-spacing:-0.916px;color:#000;">...</span><span class="t" style="left:1281.00px;top:988.00px;font-size:19.30px;line-height:19.30px;letter-spacing:0.517px;color:#000;">2020/11/11</span><span class="t" style="left:1389.60px;top:988.00px;font-size:19.30px;line-height:19.30px;letter-spacing:-0.152px;color:#000;">22:19:53</span><svg class="cj" style="left:352.00px;top:1014.40px" width="17" height="22"><use href="#dll"/></svg><span class="t" style="left:375.10px;top:1016.00px;font-size:19.30px;line-height:19.30px;letter-spacing:-0.578px;color:#000;">PPCServer.dll</span><span class="t" style="left:960.00px;top:1016.00px;font-size:19.30px;line-height:19.30px;letter-spacing:-0.122px;color:#000;">51,476</span><span class="t" style="left:1099.03px;top:1016.00px;font-size:19.30px;line-height:19.30px;letter-spacing:-0.099px;color:#000;">132,608</span><span class="t z" style="left:1182.20px;top:1016.10px;color:#000;">应用程序</span><span class="t" style="left:1254.20px;top:1016.00px;font-size:19.30px;line-height:19.30px;letter-spacing:-0.916px;color:#000;">...</span><span class="t" style="left:1281.00px;top:1016.00px;font-size:19.30px;line-height:19.30px;letter-spacing:0.517px;color:#000;">2020/11/11</span><span class="t" style="left:1389.60px;top:1016.00px;font-size:19.30px;line-height:19.30px;letter-spacing:-0.152px;color:#000;">22:19:59</span><svg class="cj" style="left:352.00px;top:1042.40px" width="17" height="22"><use href="#dll"/></svg><span class="t" style="left:375.10px;top:1044.00px;font-size:19.30px;line-height:19.30px;letter-spacing:-0.234px;color:#000;">PPCServerControl.dll</span><span class="t" style="left:970.77px;top:1044.00px;font-size:19.30px;line-height:19.30px;letter-spacing:-0.154px;color:#000;">7,439</span><span class="t" style="left:1109.80px;top:1044.00px;font-size:19.30px;line-height:19.30px;letter-spacing:-0.122px;color:#000;">17,408</span><span class="t z" style="left:1182.20px;top:1044.10px;color:#000;">应用程序</span><span class="t" style="left:1254.20px;top:1044.00px;font-size:19.30px;line-height:19.30px;letter-spacing:-0.916px;color:#000;">...</span><span class="t" style="left:1281.00px;top:1044.00px;font-size:19.30px;line-height:19.30px;letter-spacing:0.517px;color:#000;">2020/11/11</span><span class="t" style="left:1389.60px;top:1044.00px;font-size:19.30px;line-height:19.30px;letter-spacing:-0.152px;color:#000;">22:19:53</span><svg class="cj" style="left:352.00px;top:1070.40px" width="17" height="22"><use href="#dll"/></svg><span class="t" style="left:375.10px;top:1072.00px;font-size:19.30px;line-height:19.30px;letter-spacing:-0.564px;color:#000;">ServerAJLB.dll</span><span class="t" style="left:960.00px;top:1072.00px;font-size:19.30px;line-height:19.30px;letter-spacing:-0.122px;color:#000;">71,558</span><span class="t" style="left:1099.03px;top:1072.00px;font-size:19.30px;line-height:19.30px;letter-spacing:-0.099px;color:#000;">252,416</span><span class="t z" style="left:1182.20px;top:1072.10px;color:#000;">应用程序</span><span class="t" style="left:1254.20px;top:1072.00px;font-size:19.30px;line-height:19.30px;letter-spacing:-0.916px;color:#000;">...</span><span class="t" style="left:1281.00px;top:1072.00px;font-size:19.30px;line-height:19.30px;letter-spacing:0.517px;color:#000;">2020/11/11</span><span class="t" style="left:1389.60px;top:1072.00px;font-size:19.30px;line-height:19.30px;letter-spacing:-0.152px;color:#000;">22:11:43</span><svg class="cj" style="left:352.00px;top:1098.40px" width="17" height="22"><use href="#dll"/></svg><span class="t" style="left:375.10px;top:1100.00px;font-size:19.30px;line-height:19.30px;letter-spacing:-0.776px;color:#000;">ServerBREBG.dll</span><span class="t" style="left:960.00px;top:1100.00px;font-size:19.30px;line-height:19.30px;letter-spacing:-0.122px;color:#000;">44,653</span><span class="t" style="left:1099.03px;top:1100.00px;font-size:19.30px;line-height:19.30px;letter-spacing:-0.099px;color:#000;">119,808</span><span class="t z" style="left:1182.20px;top:1100.10px;color:#000;">应用程序</span><span class="t" style="left:1254.20px;top:1100.00px;font-size:19.30px;line-height:19.30px;letter-spacing:-0.916px;color:#000;">...</span><span class="t" style="left:1281.00px;top:1100.00px;font-size:19.30px;line-height:19.30px;letter-spacing:0.517px;color:#000;">2020/11/11</span><span class="t" style="left:1389.60px;top:1100.00px;font-size:19.30px;line-height:19.30px;letter-spacing:-0.152px;color:#000;">22:26:50</span><svg class="cj" style="left:352.00px;top:1126.40px" width="17" height="22"><use href="#dll"/></svg><span class="t" style="left:375.10px;top:1128.00px;font-size:19.30px;line-height:19.30px;letter-spacing:-0.293px;color:#000;">ServerBRNN.dll</span><span class="t" style="left:960.00px;top:1128.00px;font-size:19.30px;line-height:19.30px;letter-spacing:-0.122px;color:#000;">47,794</span><span class="t" style="left:1099.03px;top:1128.00px;font-size:19.30px;line-height:19.30px;letter-spacing:-0.099px;color:#000;">126,464</span><span class="t z" style="left:1182.20px;top:1128.10px;color:#000;">应用程序</span><span class="t" style="left:1254.20px;top:1128.00px;font-size:19.30px;line-height:19.30px;letter-spacing:-0.916px;color:#000;">...</span><span class="t" style="left:1281.00px;top:1128.00px;font-size:19.30px;line-height:19.30px;letter-spacing:0.517px;color:#000;">2020/11/11</span><span class="t" style="left:1389.60px;top:1128.00px;font-size:19.30px;line-height:19.30px;letter-spacing:-0.152px;color:#000;">22:13:13</span><svg class="cj" style="left:352.00px;top:1154.40px" width="17" height="22"><use href="#dll"/></svg><span class="t" style="left:375.10px;top:1156.00px;font-size:19.30px;line-height:19.30px;letter-spacing:-0.665px;color:#000;">ServerBRYB.dll</span><span class="t" style="left:960.00px;top:1156.00px;font-size:19.30px;line-height:19.30px;letter-spacing:-0.122px;color:#000;">44,859</span><span class="t" style="left:1099.03px;top:1156.00px;font-size:19.30px;line-height:19.30px;letter-spacing:-0.099px;color:#000;">124,416</span><span class="t z" style="left:1182.20px;top:1156.10px;color:#000;">应用程序</span><span class="t" style="left:1254.20px;top:1156.00px;font-size:19.30px;line-height:19.30px;letter-spacing:-0.916px;color:#000;">...</span><span class="t" style="left:1281.00px;top:1156.00px;font-size:19.30px;line-height:19.30px;letter-spacing:0.517px;color:#000;">2020/11/11</span><span class="t" style="left:1389.60px;top:1156.00px;font-size:19.30px;line-height:19.30px;letter-spacing:-0.152px;color:#000;">22:14:26</span><svg class="cj" style="left:352.00px;top:1182.40px" width="17" height="22"><use href="#dll"/></svg><span class="t" style="left:375.10px;top:1184.00px;font-size:19.30px;line-height:19.30px;letter-spacing:-0.587px;color:#000;">ServerBRZJH.dll</span><span class="t" style="left:960.00px;top:1184.00px;font-size:19.30px;line-height:19.30px;letter-spacing:-0.122px;color:#000;">49,411</span><span class="t" style="left:1099.03px;top:1184.00px;font-size:19.30px;line-height:19.30px;letter-spacing:-0.099px;color:#000;">131,584</span><span class="t z" style="left:1182.20px;top:1184.10px;color:#000;">应用程序</span><span class="t" style="left:1254.20px;top:1184.00px;font-size:19.30px;line-height:19.30px;letter-spacing:-0.916px;color:#000;">...</span><span class="t" style="left:1281.00px;top:1184.00px;font-size:19.30px;line-height:19.30px;letter-spacing:0.517px;color:#000;">2020/11/11</span><span class="t" style="left:1389.60px;top:1184.00px;font-size:19.30px;line-height:19.30px;letter-spacing:-0.152px;color:#000;">22:15:05</span><svg class="cj" style="left:352.00px;top:1210.40px" width="17" height="22"><use href="#dll"/></svg><span class="t" style="left:375.10px;top:1212.00px;font-size:19.30px;line-height:19.30px;letter-spacing:-0.059px;color:#000;">ServerControlBRNN.dll</span><span class="t" style="left:970.77px;top:1212.00px;font-size:19.30px;line-height:19.30px;letter-spacing:-0.154px;color:#000;">9,718</span><span class="t" style="left:1109.80px;top:1212.00px;font-size:19.30px;line-height:19.30px;letter-spacing:-0.122px;color:#000;">20,480</span><span class="t z" style="left:1182.20px;top:1212.10px;color:#000;">应用程序</span><span class="t" style="left:1254.20px;top:1212.00px;font-size:19.30px;line-height:19.30px;letter-spacing:-0.916px;color:#000;">...</span><span class="t" style="left:1281.00px;top:1212.00px;font-size:19.30px;line-height:19.30px;letter-spacing:0.517px;color:#000;">2020/11/11</span><span class="t" style="left:1389.60px;top:1212.00px;font-size:19.30px;line-height:19.30px;letter-spacing:-0.152px;color:#000;">22:13:05</span></div></div><div style="position:absolute;left:0;top:1231px;width:1579px;height:43.6px;background:#f0f0f0;border-top:1px solid #d2d2d2;box-sizing:border-box"></div><div style="position:absolute;left:952px;top:1239px;width:1px;height:27px;background:#cfcfcf"></div><div style="position:absolute;left:1037px;top:1239px;width:1px;height:27px;background:#cfcfcf"></div><svg class="cj" style="left:964px;top:1237px" width="112" height="31" viewBox="964 1237 112 31">
<rect x="965.8" y="1238.8" width="28.6" height="27.4" fill="#cde5f8" stroke="#4f97d2" stroke-width="1.3"/>
<g fill="#fff" stroke="#7f9fbf" stroke-width="0.8"><rect x="969.2" y="1243.6" width="4.6" height="4.6"/><rect x="969.2" y="1250" width="4.6" height="4.6"/><rect x="969.2" y="1256.4" width="4.6" height="4.6"/></g>
<path d="M977 1246H981.4M985.6 1246H990.8M977 1252.4H981.4M985.6 1252.4H990.8M977 1258.8H981.4M985.6 1258.8H990.8" stroke="#6e8eae" stroke-width="1"/>
<rect x="1005.8" y="1245.8" width="19.6" height="14.6" fill="#fdfdfd" stroke="#a5a5a5" stroke-width="1"/>
<rect x="1008" y="1248" width="15.2" height="10.2" fill="#6eb0e6"/><path d="M1008 1258.2V1254.2C1012 1251.6 1015 1251.4 1018.4 1253.2L1023.2 1251.6V1258.2Z" fill="#3c5560"/>
<path d="M1049.8 1241.8H1064L1064 1261.6L1060 1265.6H1049.8Z" fill="#f6bf26"/><path d="M1064 1252H1072.8V1261.6H1060V1265.6L1064 1261.6Z" fill="#e8ae1c"/>
<rect x="1062.8" y="1243.6" width="8.2" height="15.6" fill="#8a8a86"/><rect x="1065.2" y="1245.4" width="3.4" height="2.4" fill="#fff"/><path d="M1064.4 1250.4H1069.4M1064.4 1252.8H1069.4M1064.4 1255.2H1069.4" stroke="#e6e6e6" stroke-width="1"/>
</svg><span class="t z" style="left:1121.20px;top:1243.40px;color:#000;">文件</span><span class="t" style="left:1157.20px;top:1243.00px;font-size:19.30px;line-height:19.30px;letter-spacing:-0.250px;color:#000;">: 92277, </span><span class="t z" style="left:1230.07px;top:1243.40px;color:#000;">文件夹</span><span class="t" style="left:1284.07px;top:1243.00px;font-size:19.30px;line-height:19.30px;letter-spacing:-0.250px;color:#000;">: 10590, </span><span class="t z" style="left:1356.94px;top:1243.40px;color:#000;">压缩文件大小</span><span class="t" style="left:1464.94px;top:1243.00px;font-size:19.30px;line-height:19.30px;letter-spacing:-0.579px;color:#000;">: 6.38 GB</span><svg class="cj" style="left:1558px;top:1255px" width="16" height="16" viewBox="1558 1255 16 16" fill="#bdbdbd"><rect x="1570.2" y="1257.0" width="1.6" height="1.6"/><rect x="1566.8" y="1260.4" width="1.6" height="1.6"/><rect x="1570.2" y="1260.4" width="1.6" height="1.6"/><rect x="1563.4" y="1263.8" width="1.6" height="1.6"/><rect x="1566.8" y="1263.8" width="1.6" height="1.6"/><rect x="1570.2" y="1263.8" width="1.6" height="1.6"/><rect x="1560.0" y="1267.2" width="1.6" height="1.6"/><rect x="1563.4" y="1267.2" width="1.6" height="1.6"/><rect x="1566.8" y="1267.2" width="1.6" height="1.6"/><rect x="1570.2" y="1267.2" width="1.6" height="1.6"/></svg>
</div></div>
<div id="wmk"><svg class="cj" style="left:0.5px;top:149.8px;opacity:0.5" width="232.4" height="57.4" viewBox="-2 -2 316 78"><use href="#wms1"/></svg><svg class="cj" style="left:409.0px;top:149.8px;opacity:0.5" width="232.4" height="57.4" viewBox="-2 -2 316 78"><use href="#wms1"/></svg><svg class="cj" style="left:946.1px;top:149.8px;opacity:0.5" width="232.4" height="57.4" viewBox="-2 -2 316 78"><use href="#wms1"/></svg><svg class="cj" style="left:1353.5px;top:149.8px;opacity:0.5" width="232.4" height="57.4" viewBox="-2 -2 316 78"><use href="#wms1"/></svg><svg class="cj" style="left:0.5px;top:418.8px;opacity:0.5" width="232.4" height="57.4" viewBox="-2 -2 316 78"><use href="#wms"/></svg><svg class="cj" style="left:409.0px;top:418.8px;opacity:0.5" width="232.4" height="57.4" viewBox="-2 -2 316 78"><use href="#wms"/></svg><svg class="cj" style="left:946.1px;top:418.8px;opacity:0.5" width="232.4" height="57.4" viewBox="-2 -2 316 78"><use href="#wms"/></svg><svg class="cj" style="left:1353.5px;top:418.8px;opacity:0.5" width="232.4" height="57.4" viewBox="-2 -2 316 78"><use href="#wms"/></svg><svg class="cj" style="left:0.5px;top:768.8px;opacity:0.5" width="232.4" height="57.4" viewBox="-2 -2 316 78"><use href="#wms"/></svg><svg class="cj" style="left:409.0px;top:768.8px;opacity:0.5" width="232.4" height="57.4" viewBox="-2 -2 316 78"><use href="#wms"/></svg><svg class="cj" style="left:946.1px;top:768.8px;opacity:0.5" width="232.4" height="57.4" viewBox="-2 -2 316 78"><use href="#wms"/></svg><svg class="cj" style="left:1353.5px;top:768.8px;opacity:0.5" width="232.4" height="57.4" viewBox="-2 -2 316 78"><use href="#wms"/></svg><svg class="cj" style="left:0.5px;top:1062.8px;opacity:0.5" width="232.4" height="57.4" viewBox="-2 -2 316 78"><use href="#wms"/></svg><svg class="cj" style="left:409.0px;top:1062.8px;opacity:0.5" width="232.4" height="57.4" viewBox="-2 -2 316 78"><use href="#wms"/></svg><svg class="cj" style="left:946.1px;top:1062.8px;opacity:0.5" width="232.4" height="57.4" viewBox="-2 -2 316 78"><use href="#wms"/></svg><svg class="cj" style="left:1353.5px;top:1062.8px;opacity:0.5" width="232.4" height="57.4" viewBox="-2 -2 316 78"><use href="#wms"/></svg><svg class="cj" style="left:631.0px;top:582.0px;opacity:0.5" width="316.0" height="78.0" viewBox="-2 -2 316 78"><use href="#wm"/></svg></div>
</body></html>
